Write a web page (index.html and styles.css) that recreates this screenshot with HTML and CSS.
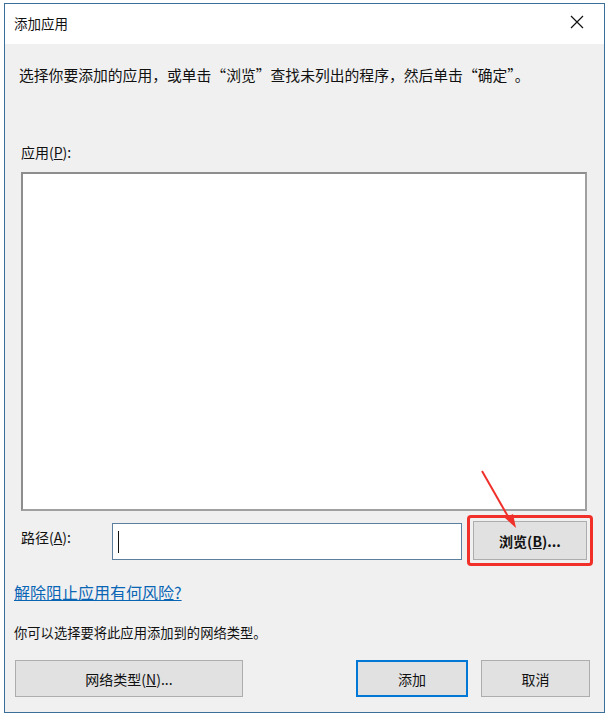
FILE: index.html
```html
<!DOCTYPE html>
<html lang="zh-CN">
<head>
  <meta charset="UTF-8" />
  <title>添加应用</title>
  <link rel="stylesheet" href="styles.css">
</head>
<body>

  <div class="dialog">
    <div class="titlebar">
      <div class="title">添加应用</div>
      <button class="close-btn" aria-label="关闭">
        <svg width="14" height="14" viewBox="0 0 14 14">
          <path d="M1 1 L13 13 M13 1 L1 13" stroke="#111" stroke-width="1.2" fill="none"/>
        </svg>
      </button>
    </div>

    <div class="content">
      <p class="intro">选择你要添加的应用，或单击“浏览”查找未列出的程序，然后单击“确定”。</p>

      <div class="field-label">应用(<u>P</u>):</div>
      <div class="app-list"></div>

      <div class="path-row">
        <label class="path-label">路径(<u>A</u>):</label>
        <div class="path-input"><span class="caret"></span></div>
        <div class="highlight">
          <button class="btn browse-btn">浏览(<u>B</u>)...</button>
        </div>
      </div>

      <a class="risk-link" href="#">解除阻止应用有何风险?</a>

      <p class="note">你可以选择要将此应用添加到的网络类型。</p>

      <div class="button-row">
        <button class="btn network-btn">网络类型(<u>N</u>)...</button>
        <div class="right-buttons">
          <button class="btn add-btn">添加</button>
          <button class="btn cancel-btn">取消</button>
        </div>
      </div>
    </div>

    <!-- annotation arrow -->
    <svg class="arrow" width="60" height="80" viewBox="0 0 60 80">
      <path d="M9 5 L37 54" stroke="#f0302a" stroke-width="2" fill="none"/>
      <path d="M43 62 L32 52 L40 48 Z" fill="#f0302a"/>
    </svg>
  </div>

</body>
</html>
```

FILE: styles.css
```css
body {
  margin: 0;
  background: #ffffff;
  font-family: "Noto Sans CJK SC", "Noto Sans", sans-serif;
  color: #111;
}

.dialog {
  position: relative;
  margin: 3px 0 0 4px;
  width: 599px;
  height: 708px;
  border: 1px solid #3a6f9a;
  background: #f0f0f0;
  display: flex;
  flex-direction: column;
}

/* Title bar */
.titlebar {
  height: 40px;
  background: #ffffff;
  display: flex;
  justify-content: space-between;
  align-items: center;
}

.title {
  font-size: 13.5px;
  padding-left: 9px;
  margin-top: -3px;
}

.close-btn {
  background: none;
  border: none;
  padding: 0;
  margin-right: 20px;
  margin-top: -5px;
  width: 14px;
  height: 14px;
}

.content {
  display: flex;
  flex-direction: column;
}

.intro {
  margin: 21px 0 0 14px;
  font-size: 14.8px;
  line-height: 20px;
}

.field-label {
  margin: 57px 0 0 16px;
  font-size: 14px;
  line-height: 20px;
}

.app-list {
  margin: 10px 0 0 16px;
  width: 562px;
  height: 335px;
  background: #ffffff;
  border: 2px solid #8d8d8d;
  border-right-color: #a0a0a0;
  border-bottom-color: #a0a0a0;
}

.path-row {
  display: flex;
  align-items: center;
  margin: 4px 0 0 16px;
}

.path-label {
  width: 91px;
  font-size: 14px;
  line-height: 20px;
  margin-top: -8px;
}

.path-input {
  width: 348px;
  height: 35px;
  background: #ffffff;
  border: 1px solid #5b7f9c;
  display: flex;
  align-items: center;
  margin-top: 2px;
}

.caret {
  width: 1px;
  height: 22px;
  background: #111;
  margin-left: 5px;
}

.highlight {
  margin-left: 5px;
  padding: 3px;
  border: 3px solid #f2302a;
  border-radius: 4px;
}

.btn {
  font-family: "Noto Sans CJK SC", "Noto Sans", sans-serif;
  font-size: 14px;
  color: #111;
  background: #e1e1e1;
  border: 1px solid #adadad;
  padding: 0;
}

.browse-btn {
  width: 114px;
  height: 39px;
  font-weight: bold;
}

.risk-link {
  margin: 16px 0 0 9px;
  font-size: 16px;
  line-height: 20px;
  color: #0a66b5;
  text-decoration: underline;
  align-self: flex-start;
}

.note {
  margin: 21px 0 0 9px;
  font-size: 13.3px;
  line-height: 20px;
}

.button-row {
  display: flex;
  justify-content: space-between;
  margin: 17px 14px 0 10px;
}

.network-btn {
  width: 228px;
  height: 37px;
}

.right-buttons {
  display: flex;
  gap: 13px;
}

.add-btn {
  width: 112px;
  height: 37px;
  border: 2px solid #0078d7;
}

.cancel-btn {
  width: 109px;
  height: 37px;
}

.arrow {
  position: absolute;
  left: 468px;
  top: 462px;
}
```
